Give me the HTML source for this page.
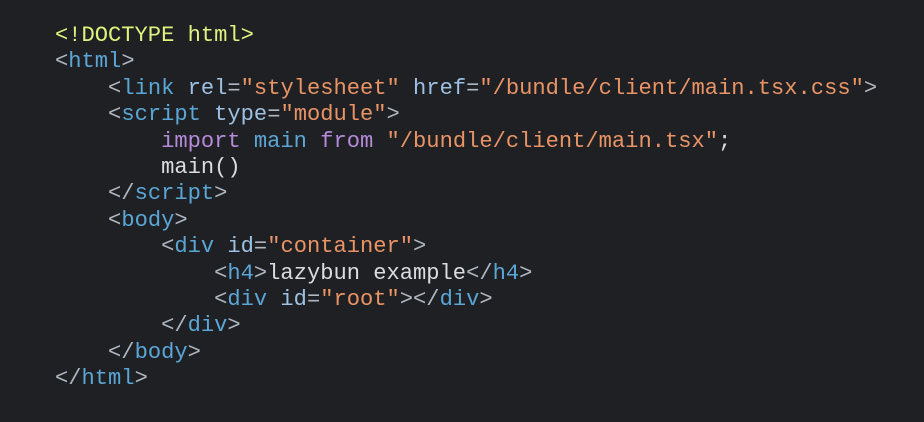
<!DOCTYPE html>
<html><head><style>
body{margin:0;background:#1f2023;width:924px;height:422px;overflow:hidden}
pre{margin:0;position:absolute;left:55px;top:23px;font-family:"Liberation Mono",monospace;font-size:22.1px;line-height:26.4px;color:#d9dde2}
.y{color:#dff27e}.p{color:#aeb7c1}.t{color:#5aa6d6}.a{color:#9cc1e3}.s{color:#ea9466}.k{color:#b48ad9}
</style></head><body><pre><span class="y">&lt;!DOCTYPE html&gt;</span>
<span class="p">&lt;</span><span class="t">html</span><span class="p">&gt;</span>
    <span class="p">&lt;</span><span class="t">link</span> <span class="a">rel</span><span class="p">=</span><span class="s">"stylesheet"</span> <span class="a">href</span><span class="p">=</span><span class="s">"/bundle/client/main.tsx.css"</span><span class="p">&gt;</span>
    <span class="p">&lt;</span><span class="t">script</span> <span class="a">type</span><span class="p">=</span><span class="s">"module"</span><span class="p">&gt;</span>
        <span class="k">import</span> <span class="t">main</span> <span class="k">from</span> <span class="s">"/bundle/client/main.tsx"</span>;
        main()
    <span class="p">&lt;/</span><span class="t">script</span><span class="p">&gt;</span>
    <span class="p">&lt;</span><span class="t">body</span><span class="p">&gt;</span>
        <span class="p">&lt;</span><span class="t">div</span> <span class="a">id</span><span class="p">=</span><span class="s">"container"</span><span class="p">&gt;</span>
            <span class="p">&lt;</span><span class="t">h4</span><span class="p">&gt;</span>lazybun example<span class="p">&lt;/</span><span class="t">h4</span><span class="p">&gt;</span>
            <span class="p">&lt;</span><span class="t">div</span> <span class="a">id</span><span class="p">=</span><span class="s">"root"</span><span class="p">&gt;&lt;/</span><span class="t">div</span><span class="p">&gt;</span>
        <span class="p">&lt;/</span><span class="t">div</span><span class="p">&gt;</span>
    <span class="p">&lt;/</span><span class="t">body</span><span class="p">&gt;</span>
<span class="p">&lt;/</span><span class="t">html</span><span class="p">&gt;</span></pre></body></html>
